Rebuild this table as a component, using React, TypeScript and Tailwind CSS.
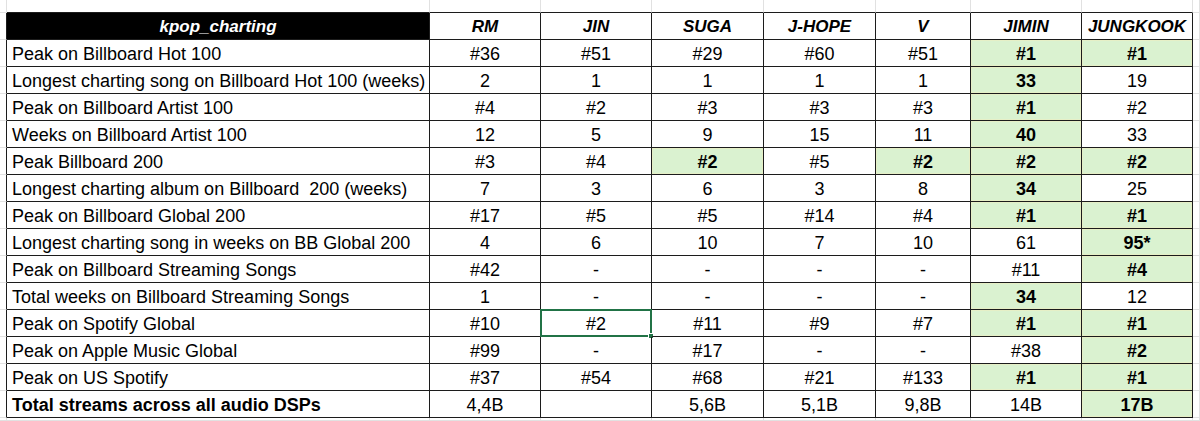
const members = ["RM", "JIN", "SUGA", "J-HOPE", "V", "JIMIN", "JUNGKOOK"];

// "!" marks a highlighted (green, bold) cell
const rows: { label: string; bold?: boolean; values: string[] }[] = [
  { label: "Peak on Billboard Hot 100", values: ["#36", "#51", "#29", "#60", "#51", "!#1", "!#1"] },
  { label: "Longest charting song on Billboard Hot 100 (weeks)", values: ["2", "1", "1", "1", "1", "!33", "19"] },
  { label: "Peak on Billboard Artist 100", values: ["#4", "#2", "#3", "#3", "#3", "!#1", "#2"] },
  { label: "Weeks on Billboard Artist 100", values: ["12", "5", "9", "15", "11", "!40", "33"] },
  { label: "Peak Billboard 200", values: ["#3", "#4", "!#2", "#5", "!#2", "!#2", "!#2"] },
  { label: "Longest charting album on Billboard  200 (weeks)", values: ["7", "3", "6", "3", "8", "!34", "25"] },
  { label: "Peak on Billboard Global 200", values: ["#17", "#5", "#5", "#14", "#4", "!#1", "!#1"] },
  { label: "Longest charting song in weeks on BB Global 200", values: ["4", "6", "10", "7", "10", "61", "!95*"] },
  { label: "Peak on Billboard Streaming Songs", values: ["#42", "-", "-", "-", "-", "#11", "!#4"] },
  { label: "Total weeks on Billboard Streaming Songs", values: ["1", "-", "-", "-", "-", "!34", "12"] },
  { label: "Peak on Spotify Global", values: ["#10", "#2", "#11", "#9", "#7", "!#1", "!#1"] },
  { label: "Peak on Apple Music Global", values: ["#99", "-", "#17", "-", "-", "#38", "!#2"] },
  { label: "Peak on US Spotify", values: ["#37", "#54", "#68", "#21", "#133", "!#1", "!#1"] },
  { label: "Total streams across all audio DSPs", bold: true, values: ["4,4B", "", "5,6B", "5,1B", "9,8B", "14B", "!17B"] },
];

const SELECTED = { row: 11, col: 2 }; // JIN / Peak on Spotify Global

function borderClasses(rightDark: boolean, bottomDark: boolean) {
  return [
    "border-r border-b",
    rightDark ? "border-r-[#1c1c1c]" : "border-r-[#e1e1e1]",
    bottomDark ? "border-b-[#1c1c1c]" : "border-b-[#e1e1e1]",
  ].join(" ");
}

function Cell({ r, c }: { r: number; c: number }) {
  const inRows = r >= 1 && r <= 15;
  const inCols = c >= 1 && c <= 8;
  const border = borderClasses(inRows && c <= 8, inCols && r <= 15);

  // sheet gridlines outside the table
  if (!(inRows && inCols)) return <div className={border} />;

  // header row
  if (r === 1) {
    if (c === 1) {
      return (
        <div className={`${border} bg-black text-white text-[17px] font-bold italic flex items-center justify-center pt-[1px]`}>
          kpop_charting
        </div>
      );
    }
    return (
      <div className={`${border} text-[17px] font-bold italic flex items-center justify-center pt-[1px]`}>
        {members[c - 2]}
      </div>
    );
  }

  const row = rows[r - 2];
  if (c === 1) {
    return (
      <div className={`${border} flex items-center pl-[5px] pt-[1px] whitespace-pre ${row.bold ? "font-bold" : ""}`}>
        {row.label}
      </div>
    );
  }

  const raw = row.values[c - 2];
  const hi = raw.startsWith("!");
  const text = hi ? raw.slice(1) : raw;
  const selected = r === SELECTED.row + 1 && c === SELECTED.col + 1;

  return (
    <div
      className={`${border} relative flex items-center justify-center pt-[1px] ${
        hi ? "bg-[#daf2d0] font-bold shadow-[inset_0_0_0_1px_#e6efc6]" : ""
      }`}
    >
      {text}
      {selected && (
        <div className="absolute -left-[1px] -top-[1px] -right-[1px] -bottom-[1px] border-2 border-[#217346]">
          <div className="absolute -right-[4px] -bottom-[4px] w-[6px] h-[6px] bg-[#217346] border border-white" />
        </div>
      )}
    </div>
  );
}

export default function App() {
  const cells = [];
  for (let r = 0; r < 17; r++) {
    for (let c = 0; c < 10; c++) {
      cells.push(<Cell key={`${r}-${c}`} r={r} c={c} />);
    }
  }

  return (
    <div className="w-full h-[421px] overflow-hidden bg-white text-black text-[18px] leading-none font-['Liberation_Sans',Arial,sans-serif]">
      <div className="grid w-full h-full grid-cols-[7px_423px_111px_111px_112px_112px_95px_111px_111px_1fr] grid-rows-[13px_repeat(15,27px)_1fr]">
        {cells}
      </div>
    </div>
  );
}
